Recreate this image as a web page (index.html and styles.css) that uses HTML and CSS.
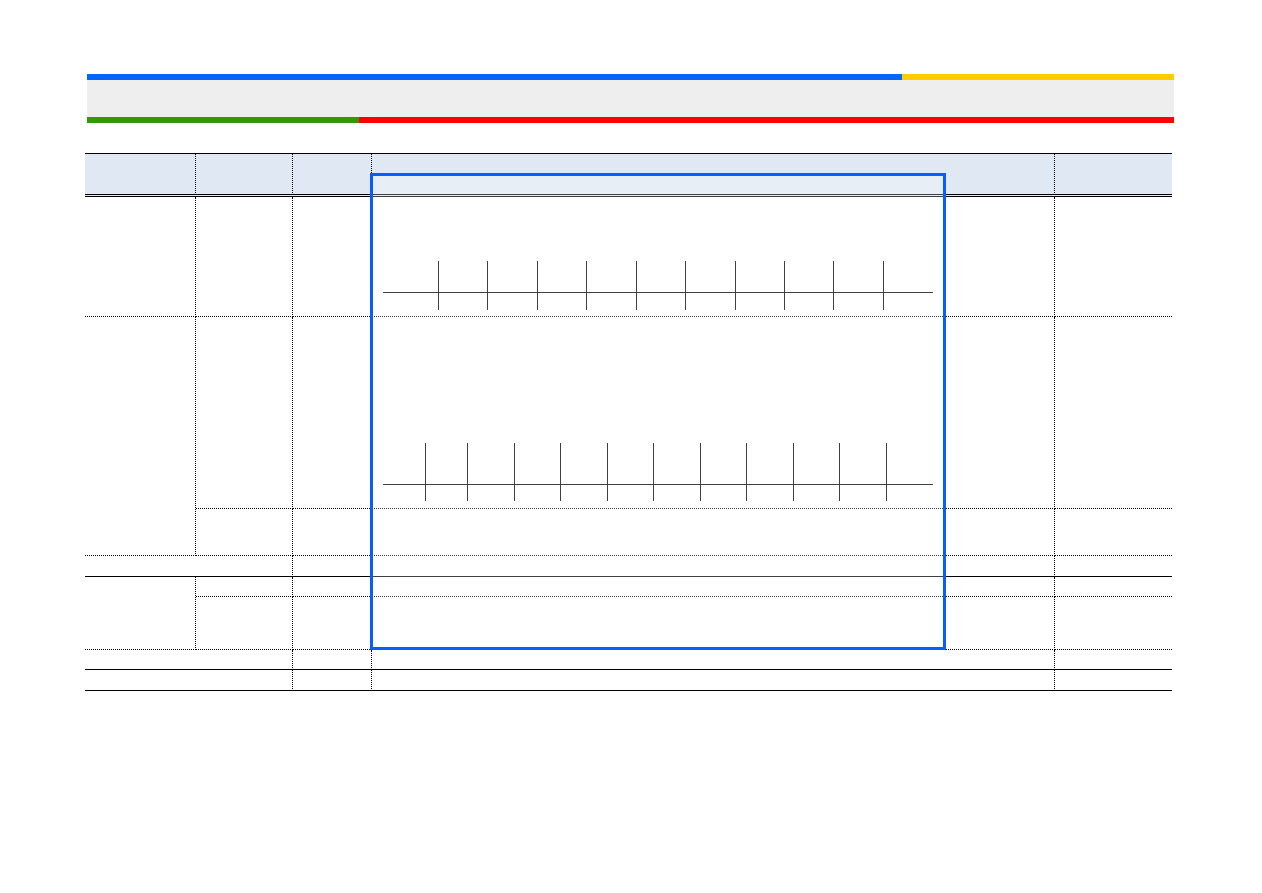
FILE: index.html
```html
<!DOCTYPE html>
<html lang="en">
<head>
    <meta charset="UTF-8">
    <meta name="viewport" content="width=device-width, initial-scale=1.0">
    <title>Sheet</title>
    <link rel="stylesheet" href="styles.css">
</head>
<body>
    <div class="page">
        <div class="band">
            <div class="band-row">
                <div class="seg seg-blue"></div>
                <div class="seg seg-yellow"></div>
            </div>
            <div class="band-mid"></div>
            <div class="band-row">
                <div class="seg seg-green"></div>
                <div class="seg seg-red"></div>
            </div>
        </div>

        <div class="sheet">
            <table class="grid">
                <colgroup>
                    <col class="c1">
                    <col class="c2">
                    <col class="c3">
                    <col class="c4">
                    <col class="c5">
                </colgroup>
                <tr class="head">
                    <th></th><th></th><th></th><th></th><th class="last"></th>
                </tr>
                <tr class="r1">
                    <td></td><td></td><td></td>
                    <td>
                        <svg class="scale" width="682" height="119" viewBox="0 0 682 119">
                            <line x1="11" y1="95.5" x2="561" y2="95.5"/>
                            <line x1="66.5" y1="64" x2="66.5" y2="113"/>
                            <line x1="115.5" y1="64" x2="115.5" y2="113"/>
                            <line x1="165.5" y1="64" x2="165.5" y2="113"/>
                            <line x1="214.5" y1="64" x2="214.5" y2="113"/>
                            <line x1="264.5" y1="64" x2="264.5" y2="113"/>
                            <line x1="313.5" y1="64" x2="313.5" y2="113"/>
                            <line x1="363.5" y1="64" x2="363.5" y2="113"/>
                            <line x1="412.5" y1="64" x2="412.5" y2="113"/>
                            <line x1="461.5" y1="64" x2="461.5" y2="113"/>
                            <line x1="511.5" y1="64" x2="511.5" y2="113"/>
                        </svg>
                    </td>
                    <td class="last"></td>
                </tr>
                <tr class="r2">
                    <td rowspan="2"></td><td></td><td></td>
                    <td>
                        <svg class="scale" width="682" height="191" viewBox="0 0 682 191">
                            <line x1="11" y1="167.5" x2="561" y2="167.5"/>
                            <line x1="53.5" y1="126" x2="53.5" y2="184"/>
                            <line x1="95.5" y1="126" x2="95.5" y2="184"/>
                            <line x1="142.5" y1="126" x2="142.5" y2="184"/>
                            <line x1="188.5" y1="126" x2="188.5" y2="184"/>
                            <line x1="235.5" y1="126" x2="235.5" y2="184"/>
                            <line x1="281.5" y1="126" x2="281.5" y2="184"/>
                            <line x1="328.5" y1="126" x2="328.5" y2="184"/>
                            <line x1="374.5" y1="126" x2="374.5" y2="184"/>
                            <line x1="421.5" y1="126" x2="421.5" y2="184"/>
                            <line x1="467.5" y1="126" x2="467.5" y2="184"/>
                            <line x1="514.5" y1="126" x2="514.5" y2="184"/>
                        </svg>
                    </td>
                    <td class="last"></td>
                </tr>
                <tr class="r3">
                    <td></td><td></td><td></td><td class="last"></td>
                </tr>
                <tr class="r4 solid">
                    <td colspan="2"></td><td></td><td></td><td class="last"></td>
                </tr>
                <tr class="r5">
                    <td rowspan="2"></td><td></td><td></td><td></td><td class="last"></td>
                </tr>
                <tr class="r6">
                    <td></td><td></td><td></td><td class="last"></td>
                </tr>
                <tr class="r7 solid">
                    <td colspan="2"></td><td></td><td></td><td class="last"></td>
                </tr>
                <tr class="r8 solid">
                    <td colspan="2"></td><td></td><td></td><td class="last"></td>
                </tr>
            </table>
            <div class="focus"></div>
        </div>
    </div>
</body>
</html>
```

FILE: styles.css
```css
* {
    box-sizing: border-box;
}

body {
    margin: 0;
    background-color: #fff;
    font-family: "Liberation Sans", Arial, sans-serif;
}

.page {
    padding-top: 74px;
}

/* coloured header band */
.band {
    margin-left: 87px;
    width: 1087px;
}

.band-row {
    display: flex;
    height: 6px;
}

.seg-blue {
    flex: 0 0 815px;
    background-color: #0066ff;
}

.seg-yellow {
    flex: 1;
    background-color: #ffcc00;
}

.seg-green {
    flex: 0 0 272px;
    background-color: #339900;
}

.seg-red {
    flex: 1;
    background-color: #ff0000;
}

.band-mid {
    height: 37px;
    background-color: #eeeeee;
}

/* table */
.sheet {
    position: relative;
    margin: 30px 0 0 85px;
    width: 1087px;
}

.grid {
    border-collapse: separate;
    border-spacing: 0;
    table-layout: fixed;
    width: 1087px;
}

.c1 { width: 111px; }
.c2 { width: 97px; }
.c3 { width: 79px; }
.c4 { width: 683px; }
.c5 { width: 117px; }

.grid th,
.grid td {
    padding: 0;
    vertical-align: top;
    border-right: 1px dotted #000;
    border-bottom: 1px dotted #000;
}

.grid .last {
    border-right: none;
}

.grid th {
    background-color: #dfe8f3;
    border-top: 1px solid #000;
    border-bottom: 3px double #000;
}

.grid tr.solid td {
    border-bottom-style: solid;
}

.head { height: 44px; }
.r1 { height: 120px; }
.r2 { height: 192px; }
.r3 { height: 47px; }
.r4 { height: 21px; }
.r5 { height: 20px; }
.r6 { height: 53px; }
.r7 { height: 20px; }
.r8 { height: 21px; }

.scale {
    display: block;
}

.scale line {
    stroke: #000;
    stroke-width: 1;
}

.focus {
    position: absolute;
    left: 285px;
    top: 20px;
    width: 576px;
    height: 477px;
    border: 3px solid #0a5cff;
    background-color: rgba(255, 255, 255, 0.25);
}
```
